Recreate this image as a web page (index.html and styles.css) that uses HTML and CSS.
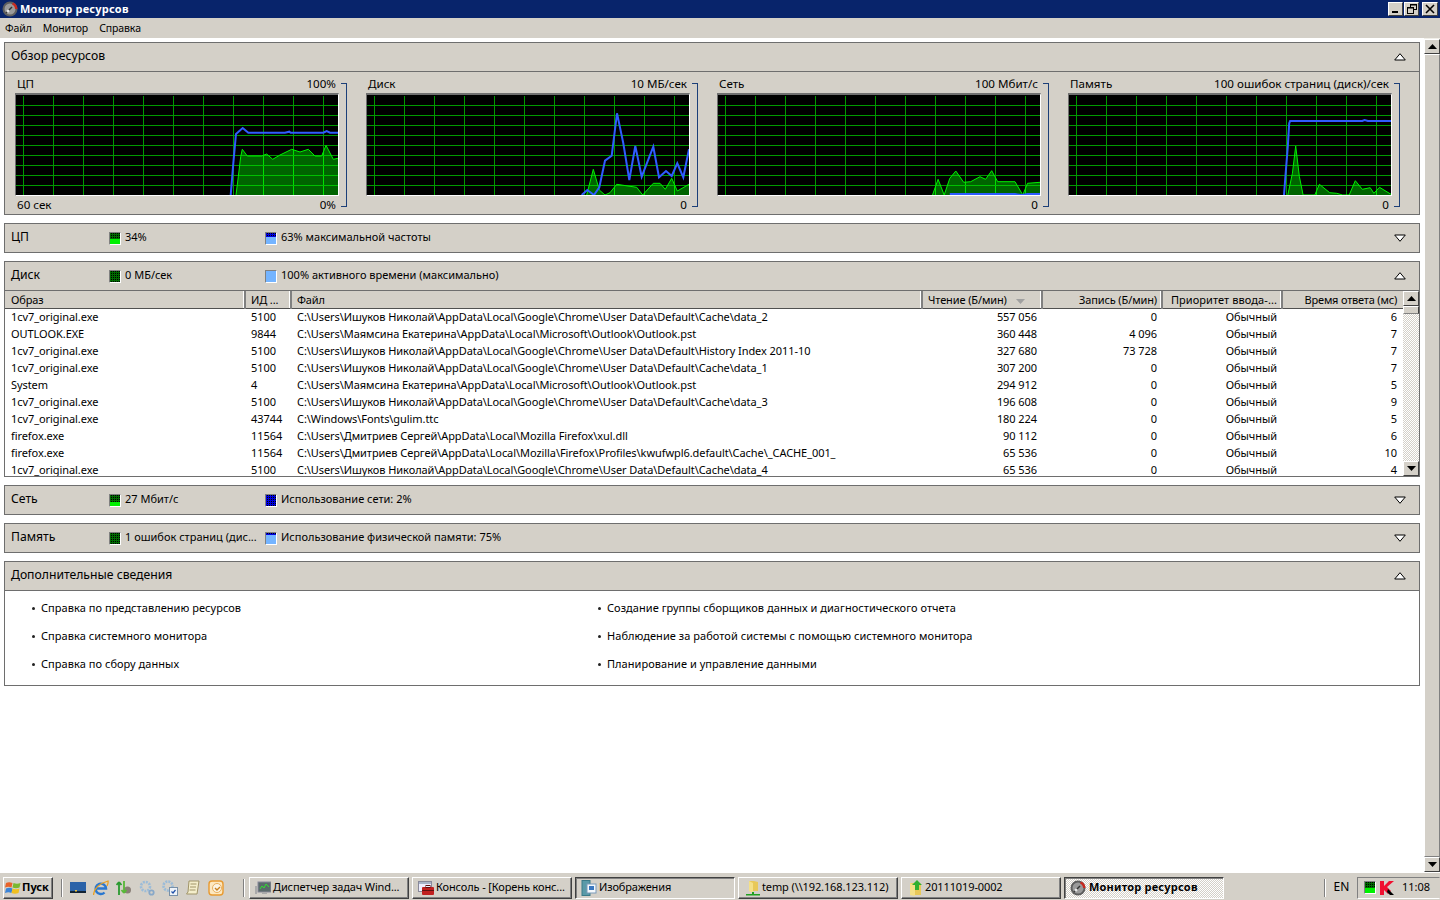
FILE: index.html
```html
<!DOCTYPE html>
<html>
  <head>
    <meta charset="utf-8">
    <title>Монитор ресурсов</title>
    <link rel="stylesheet" href="styles.css">
  </head>
  <body>
    <svg class="defs" width="0" height="0">
      <defs>
        <pattern id="grid" patternUnits="userSpaceOnUse" width="30" height="10">
          <rect x="7" y="0" width="1" height="10" fill="#009a00"></rect>
          <rect x="0" y="0" width="30" height="1" fill="#009a00"></rect>
        </pattern>
        <pattern id="grid-hi" patternUnits="userSpaceOnUse" width="30" height="10">
          <rect x="7" y="0" width="1" height="10" fill="#00e000"></rect>
          <rect x="0" y="0" width="30" height="1" fill="#00c000"></rect>
        </pattern>
        <symbol id="gauge" viewBox="0 0 16 16">
          <circle cx="8" cy="8" r="7.5" fill="#5e5e5e"></circle>
          <circle cx="8" cy="8" r="5.5" fill="#9a9a9a"></circle>
          <path d="M11 1.5 A7.5 7.5 0 0 1 15.5 8 L13 8 A5 5 0 0 0 10 3.5 Z" fill="#c8281e"></path>
          <path d="M4 12 L10 6" stroke="#333" stroke-width="1.5"></path>
          <circle cx="6" cy="10" r="1.5" fill="#e8e8e8"></circle>
        </symbol>
      </defs>
    </svg>

    <div class="titlebar">
      <svg class="title-icon" width="16" height="16"><use href="#gauge"></use></svg>
      <span class="title-text">Монитор ресурсов</span>
      <div class="win-buttons">
        <button class="win-btn">
          <svg width="10" height="10"><rect x="1" y="7" width="6" height="2" fill="#000"></rect></svg>
        </button>
        <button class="win-btn">
          <svg width="10" height="10" fill="none" stroke="#000"><rect x="3.5" y="0.5" width="6" height="5"></rect><rect x="0.5" y="3.5" width="6" height="6" fill="#d4d0c8"></rect><path d="M3 1h7M0 4h7"></path></svg>
        </button>
        <button class="win-btn win-btn-close">
          <svg width="10" height="10" stroke="#000" stroke-width="1.6"><path d="M1 1 L9 9 M9 1 L1 9"></path></svg>
        </button>
      </div>
    </div>

    <div class="menubar">
      <span>Файл</span>
      <span>Монитор</span>
      <span>Справка</span>
    </div>

    <div class="workspace">
      <div class="content">

        <section class="panel">
          <div class="panel-head">
            <span class="panel-title">Обзор ресурсов</span>
            <svg class="chevron" width="12" height="8"><polygon points="6,0.7 11.3,7 0.7,7" fill="#fff" stroke="#000"></polygon></svg>
          </div>
          <div class="graphs">
            <div class="graph-cell">
              <div class="graph-main">
                <div class="graph-labels"><span>ЦП</span><span>100%</span></div>
                <div class="graph-frame">
                  <svg width="322" height="100">
                    <rect width="322" height="100" fill="#000"></rect>
                    <rect y="1" width="322" height="99" fill="url(#grid)"></rect>
                    <polygon class="area" points="220,100 222.3,81.7 224.7,61.7 226.3,54.3 231.3,61 245.7,61 250.7,59 256.7,64.3 264,60 275.7,54.3 284,57 292.3,54.3 299,61 305.7,61 310,50.3 317.3,64.3 322,63.3 322,100"></polygon>
                    <polygon fill="url(#grid-hi)" points="220,100 222.3,81.7 224.7,61.7 226.3,54.3 231.3,61 245.7,61 250.7,59 256.7,64.3 264,60 275.7,54.3 284,57 292.3,54.3 299,61 305.7,61 310,50.3 317.3,64.3 322,63.3 322,100"></polygon>
                    <polyline class="line-green" points="220,100 222.3,81.7 224.7,61.7 226.3,54.3 231.3,61 245.7,61 250.7,59 256.7,64.3 264,60 275.7,54.3 284,57 292.3,54.3 299,61 305.7,61 310,50.3 317.3,64.3 322,63.3"></polyline>
                    <polyline class="line-blue" points="214.7,100 217.3,68.3 220,39 226.7,33 232.3,37.7 269,37.7 273.3,36.7 274.7,37.7 307.3,37.7 310.7,36 314,37.7 322,37.7"></polyline>
                  </svg>
                </div>
                <div class="graph-labels graph-labels-bottom"><span>60 сек</span><span>0%</span></div>
              </div>
              <div class="bracket"></div>
            </div>

            <div class="graph-cell">
              <div class="graph-main">
                <div class="graph-labels"><span>Диск</span><span>10 МБ/сек</span></div>
                <div class="graph-frame">
                  <svg width="322" height="100">
                    <rect width="322" height="100" fill="#000"></rect>
                    <rect y="1" width="322" height="99" fill="url(#grid)"></rect>
                    <polygon class="area" points="219.7,100 226.3,74.3 232.3,95 238,100 243,97.7 249.7,89.3 269.7,92.3 275.7,100 286.3,88.3 293,88.3 298.3,94.3 304.7,83.3 310.3,96 322,89.3 322,100"></polygon>
                    <polygon fill="url(#grid-hi)" points="219.7,100 226.3,74.3 232.3,95 238,100 243,97.7 249.7,89.3 269.7,92.3 275.7,100 286.3,88.3 293,88.3 298.3,94.3 304.7,83.3 310.3,96 322,89.3 322,100"></polygon>
                    <polyline class="line-green" points="219.7,100 226.3,74.3 232.3,95 238,100 243,97.7 249.7,89.3 269.7,92.3 275.7,100 286.3,88.3 293,88.3 298.3,94.3 304.7,83.3 310.3,96 322,89.3"></polyline>
                    <polyline class="line-blue" points="214.7,100 220.3,95 227,100 232.3,92.3 238,65.7 244.7,60.7 250,18.3 256.3,48.3 262.3,85 268.3,51 274.7,81.7 286.3,51.7 292,82.3 299,76 304.7,81 310.3,68.3 316.3,82.3 322,54.3"></polyline>
                  </svg>
                </div>
                <div class="graph-labels graph-labels-bottom"><span></span><span>0</span></div>
              </div>
              <div class="bracket"></div>
            </div>

            <div class="graph-cell">
              <div class="graph-main">
                <div class="graph-labels"><span>Сеть</span><span>100 Мбит/с</span></div>
                <div class="graph-frame">
                  <svg width="322" height="100">
                    <rect width="322" height="100" fill="#000"></rect>
                    <rect y="1" width="322" height="99" fill="url(#grid)"></rect>
                    <polygon class="area" points="214.5,100 220.1,84.3 226.2,100 231.8,83.3 237.8,76 245.7,87.3 252.7,86.7 262,81.7 267.6,84.3 273.7,75.7 279.7,86.7 297,86.7 304.8,100 309.5,88.3 322,87.3 322,100"></polygon>
                    <polygon fill="url(#grid-hi)" points="214.5,100 220.1,84.3 226.2,100 231.8,83.3 237.8,76 245.7,87.3 252.7,86.7 262,81.7 267.6,84.3 273.7,75.7 279.7,86.7 297,86.7 304.8,100 309.5,88.3 322,87.3 322,100"></polygon>
                    <polyline class="line-green" points="214.5,100 220.1,84.3 226.2,100 231.8,83.3 237.8,76 245.7,87.3 252.7,86.7 262,81.7 267.6,84.3 273.7,75.7 279.7,86.7 297,86.7 304.8,100 309.5,88.3 322,87.3"></polyline>
                    <polyline class="line-blue" points="231.8,99 297,99 304,100 309.5,99 322,99"></polyline>
                  </svg>
                </div>
                <div class="graph-labels graph-labels-bottom"><span></span><span>0</span></div>
              </div>
              <div class="bracket"></div>
            </div>

            <div class="graph-cell">
              <div class="graph-main">
                <div class="graph-labels"><span>Память</span><span>100 ошибок страниц (диск)/сек</span></div>
                <div class="graph-frame">
                  <svg width="322" height="100">
                    <rect width="322" height="100" fill="#000"></rect>
                    <rect y="1" width="322" height="99" fill="url(#grid)"></rect>
                    <polygon class="area" points="218.8,100 223.4,78.3 226.7,51 230.4,81.7 234.1,100 245.8,100 250.4,89.3 260.7,97.7 267.7,98.3 273.7,100 280.2,100 286.3,85.7 293.3,94.3 301.2,92.7 304.9,98.3 310.5,92.3 322,99.3 322,100"></polygon>
                    <polygon fill="url(#grid-hi)" points="218.8,100 223.4,78.3 226.7,51 230.4,81.7 234.1,100 245.8,100 250.4,89.3 260.7,97.7 267.7,98.3 273.7,100 280.2,100 286.3,85.7 293.3,94.3 301.2,92.7 304.9,98.3 310.5,92.3 322,99.3 322,100"></polygon>
                    <polyline class="line-green" points="218.8,100 223.4,78.3 226.7,51 230.4,81.7 234.1,100 245.8,100 250.4,89.3 260.7,97.7 267.7,98.3 273.7,100 280.2,100 286.3,85.7 293.3,94.3 301.2,92.7 304.9,98.3 310.5,92.3 322,99.3"></polyline>
                    <polyline class="line-blue" points="215,100 216.4,81.7 218.8,51.7 220.2,28.3 221.1,26 293.3,26 295.6,25 298.9,26 322,26"></polyline>
                  </svg>
                </div>
                <div class="graph-labels graph-labels-bottom"><span></span><span>0</span></div>
              </div>
              <div class="bracket"></div>
            </div>
          </div>
        </section>

        <section class="panel">
          <div class="panel-head panel-head-only">
            <span class="panel-title">ЦП</span>
            <div class="stat">
              <span class="swatch swatch-green"><span class="swatch-level" style="height: 60%"></span></span>
              <span class="stat-text">34%</span>
            </div>
            <div class="stat">
              <span class="swatch swatch-blue"><span class="swatch-level" style="height: 37%"></span></span>
              <span class="stat-text">63% максимальной частоты</span>
            </div>
            <svg class="chevron" width="12" height="8"><polygon points="0.7,1 11.3,1 6,7.3" fill="#fff" stroke="#000"></polygon></svg>
          </div>
        </section>

        <section class="panel">
          <div class="panel-head">
            <span class="panel-title">Диск</span>
            <div class="stat">
              <span class="swatch swatch-green"><span class="swatch-level" style="height: 100%"></span></span>
              <span class="stat-text">0 МБ/сек</span>
            </div>
            <div class="stat">
              <span class="swatch swatch-blue"><span class="swatch-level" style="height: 0%"></span></span>
              <span class="stat-text">100% активного времени (максимально)</span>
            </div>
            <svg class="chevron" width="12" height="8"><polygon points="6,0.7 11.3,7 0.7,7" fill="#fff" stroke="#000"></polygon></svg>
          </div>
          <div class="disk-body">
            <div class="table-wrap">
              <table class="disk-table">
                <colgroup>
                  <col class="col-image">
                  <col class="col-pid">
                  <col class="col-file">
                  <col class="col-num">
                  <col class="col-num">
                  <col class="col-num">
                  <col class="col-last">
                </colgroup>
                <thead>
                  <tr>
                    <th>Образ</th>
                    <th>ИД ...</th>
                    <th>Файл</th>
                    <th>Чтение (Б/мин)<svg class="sort" width="9" height="5"><polygon points="0,0 9,0 4.5,5" fill="#a0a0a0"></polygon></svg></th>
                    <th class="num">Запись (Б/мин)</th>
                    <th class="num th-wide">Приоритет ввода-...</th>
                    <th class="num th-last">Время ответа (мс)</th>
                  </tr>
                </thead>
                <tbody>
                  <tr><td>1cv7_original.exe</td><td>5100</td><td>C:\Users\Ишуков Николай\AppData\Local\Google\Chrome\User Data\Default\Cache\data_2</td><td class="num">557 056</td><td class="num">0</td><td class="num">Обычный</td><td class="num">6</td></tr>
                  <tr><td>OUTLOOK.EXE</td><td>9844</td><td>C:\Users\Маямсина Екатерина\AppData\Local\Microsoft\Outlook\Outlook.pst</td><td class="num">360 448</td><td class="num">4 096</td><td class="num">Обычный</td><td class="num">7</td></tr>
                  <tr><td>1cv7_original.exe</td><td>5100</td><td>C:\Users\Ишуков Николай\AppData\Local\Google\Chrome\User Data\Default\History Index 2011-10</td><td class="num">327 680</td><td class="num">73 728</td><td class="num">Обычный</td><td class="num">7</td></tr>
                  <tr><td>1cv7_original.exe</td><td>5100</td><td>C:\Users\Ишуков Николай\AppData\Local\Google\Chrome\User Data\Default\Cache\data_1</td><td class="num">307 200</td><td class="num">0</td><td class="num">Обычный</td><td class="num">7</td></tr>
                  <tr><td>System</td><td>4</td><td>C:\Users\Маямсина Екатерина\AppData\Local\Microsoft\Outlook\Outlook.pst</td><td class="num">294 912</td><td class="num">0</td><td class="num">Обычный</td><td class="num">5</td></tr>
                  <tr><td>1cv7_original.exe</td><td>5100</td><td>C:\Users\Ишуков Николай\AppData\Local\Google\Chrome\User Data\Default\Cache\data_3</td><td class="num">196 608</td><td class="num">0</td><td class="num">Обычный</td><td class="num">9</td></tr>
                  <tr><td>1cv7_original.exe</td><td>43744</td><td>C:\Windows\Fonts\gulim.ttc</td><td class="num">180 224</td><td class="num">0</td><td class="num">Обычный</td><td class="num">5</td></tr>
                  <tr><td>firefox.exe</td><td>11564</td><td>C:\Users\Дмитриев Сергей\AppData\Local\Mozilla Firefox\xul.dll</td><td class="num">90 112</td><td class="num">0</td><td class="num">Обычный</td><td class="num">6</td></tr>
                  <tr><td>firefox.exe</td><td>11564</td><td>C:\Users\Дмитриев Сергей\AppData\Local\Mozilla\Firefox\Profiles\kwufwpl6.default\Cache\_CACHE_001_</td><td class="num">65 536</td><td class="num">0</td><td class="num">Обычный</td><td class="num">10</td></tr>
                  <tr><td>1cv7_original.exe</td><td>5100</td><td>C:\Users\Ишуков Николай\AppData\Local\Google\Chrome\User Data\Default\Cache\data_4</td><td class="num">65 536</td><td class="num">0</td><td class="num">Обычный</td><td class="num">4</td></tr>
                </tbody>
              </table>
            </div>
            <div class="table-scroll">
              <div class="scroll-btn"><svg width="9" height="5"><polygon points="4.5,0 9,5 0,5" fill="#000"></polygon></svg></div>
              <div class="scroll-thumb"></div>
              <div class="scroll-track"></div>
              <div class="scroll-btn"><svg width="9" height="5"><polygon points="0,0 9,0 4.5,5" fill="#000"></polygon></svg></div>
            </div>
          </div>
        </section>

        <section class="panel">
          <div class="panel-head panel-head-only">
            <span class="panel-title">Сеть</span>
            <div class="stat">
              <span class="swatch swatch-green"><span class="swatch-level" style="height: 65%"></span></span>
              <span class="stat-text">27 Мбит/с</span>
            </div>
            <div class="stat">
              <span class="swatch swatch-blue"><span class="swatch-level" style="height: 100%"></span></span>
              <span class="stat-text">Использование сети: 2%</span>
            </div>
            <svg class="chevron" width="12" height="8"><polygon points="0.7,1 11.3,1 6,7.3" fill="#fff" stroke="#000"></polygon></svg>
          </div>
        </section>

        <section class="panel">
          <div class="panel-head panel-head-only">
            <span class="panel-title">Память</span>
            <div class="stat">
              <span class="swatch swatch-green"><span class="swatch-level" style="height: 100%"></span></span>
              <span class="stat-text">1 ошибок страниц (дис...</span>
            </div>
            <div class="stat">
              <span class="swatch swatch-blue"><span class="swatch-level" style="height: 25%"></span></span>
              <span class="stat-text">Использование физической памяти: 75%</span>
            </div>
            <svg class="chevron" width="12" height="8"><polygon points="0.7,1 11.3,1 6,7.3" fill="#fff" stroke="#000"></polygon></svg>
          </div>
        </section>

        <section class="panel panel-links">
          <div class="panel-head">
            <span class="panel-title">Дополнительные сведения</span>
            <svg class="chevron" width="12" height="8"><polygon points="6,0.7 11.3,7 0.7,7" fill="#fff" stroke="#000"></polygon></svg>
          </div>
          <ul class="links">
            <li>Справка по представлению ресурсов</li>
            <li>Создание группы сборщиков данных и диагностического отчета</li>
            <li>Справка системного монитора</li>
            <li>Наблюдение за работой системы с помощью системного монитора</li>
            <li>Справка по сбору данных</li>
            <li>Планирование и управление данными</li>
          </ul>
        </section>
      </div>

      <div class="page-scroll">
        <div class="scroll-btn"><svg width="9" height="5"><polygon points="4.5,0 9,5 0,5" fill="#000"></polygon></svg></div>
        <div class="page-thumb"></div>
        <div class="scroll-btn"><svg width="9" height="5"><polygon points="0,0 9,0 4.5,5" fill="#000"></polygon></svg></div>
      </div>
    </div>

    <div class="taskbar">
      <button class="start">
        <svg width="16" height="16">
          <path d="M1 3 Q4 1.5 7.5 3 L6.5 7.5 Q3.5 6 0 7.5 Z" fill="#e8632a"></path>
          <path d="M8.5 3 Q12 4.5 15.5 3 L14.5 7.5 Q11 9 7.5 7.5 Z" fill="#7ab82e"></path>
          <path d="M0 8.5 Q3.5 7 6.5 8.5 L5.5 13 Q2.5 11.5 -1 13 Z" fill="#3a84d8" transform="translate(1 0)"></path>
          <path d="M7.5 8.5 Q11 10 14.5 8.5 L13.5 13 Q10 14.5 6.5 13 Z" fill="#f0c020"></path>
        </svg>
        <span class="bar-text">Пуск</span>
      </button>
      <span class="tb-sep tb-sep-first"></span>
      <div class="quick">
        <svg width="16" height="16"><rect y="2" width="16" height="11" fill="#2a62a8"></rect><rect y="11" width="16" height="2" fill="#123"></rect><rect x="5" y="10" width="2" height="1.5" fill="#e8c040"></rect></svg>
        <svg width="16" height="16" fill="none"><path d="M3 8.5 H13 A5.2 5.2 0 1 0 11.5 12.5" stroke="#2a78d0" stroke-width="2.4"></path><path d="M0.5 15 Q1.5 5 15 1 Q15.5 3 14 6" stroke="#e8a020" stroke-width="1.3"></path></svg>
        <svg width="16" height="16" fill="none"><circle cx="11.5" cy="10" r="3.5" fill="#8a7f78"></circle><path d="M3 15V2M3 2L0.5 5M3 2L5.5 5" stroke="#2a9a30" stroke-width="1.8"></path><path d="M8 1V13M8 13L5.5 10M8 13L10.5 10" stroke="#58b838" stroke-width="1.8"></path></svg>
        <svg width="16" height="16" fill="none"><circle cx="6.5" cy="6.5" r="4.5" stroke="#9cbcd8" stroke-width="2.6" stroke-dasharray="2 1"></circle><circle cx="12.5" cy="12.5" r="2.2" stroke="#88a8c8" stroke-width="1.8"></circle></svg>
        <svg width="16" height="16" fill="none"><circle cx="6" cy="6" r="4.5" stroke="#9cbcd8" stroke-width="2.6" stroke-dasharray="2 1"></circle><rect x="7.5" y="7.5" width="8" height="8" fill="#eef2f8" stroke="#7890a8"></rect><path d="M9.5 11.5l1.5 1.5 2.5-3" stroke="#2050a8" stroke-width="1.2"></path></svg>
        <svg width="16" height="16"><path d="M4 1H14L12 14H1.5L3 12Z" fill="#f4eecb" stroke="#a09468"></path><path d="M5.5 4h6M5 7h6M4.5 10h6" stroke="#a09468"></path></svg>
        <svg width="16" height="16" fill="none"><rect x="1" y="1" width="14" height="14" rx="3" fill="#fde8c0" stroke="#e89a30" stroke-width="1.4"></rect><circle cx="9" cy="8" r="4.5" fill="#fbf4e4" stroke="#e8b060"></circle><path d="M7 8l2 2 3-3" stroke="#c88020" stroke-width="1.4"></path></svg>
      </div>
      <span class="tb-sep tb-sep-second"></span>
      <div class="tasks">
        <button class="task">
          <svg width="16" height="16"><rect x="3" y="2" width="13" height="10" fill="#5a6a6a" stroke="#889"></rect><path d="M5 9l2-3 2 2 2-4 3 3" stroke="#30e030" fill="none"></path><rect x="7" y="12" width="5" height="2" fill="#aaa"></rect><rect y="6" width="2" height="8" fill="#aaa"></rect></svg>
          <span class="bar-text">Диспетчер задач Wind...</span>
        </button>
        <button class="task">
          <svg width="16" height="16"><rect x="0.5" y="1.5" width="13" height="10" fill="#eef" stroke="#889"></rect><rect x="1" y="2" width="12" height="2" fill="#a8b4c8"></rect><rect x="4" y="7" width="12" height="8" rx="1" fill="#c02020"></rect><rect x="4" y="10" width="12" height="1" fill="#601010"></rect><rect x="8" y="5.5" width="4" height="2" fill="none" stroke="#601010"></rect></svg>
          <span class="bar-text">Консоль - [Корень конс...</span>
        </button>
        <button class="task task-down">
          <svg width="16" height="16"><rect x="1" y="0.5" width="8" height="15" fill="#5a9aa8" stroke="#3a7a88"></rect><rect x="6" y="4" width="9" height="9" fill="#f4f8fc" stroke="#7a9ab8"></rect><rect x="8" y="6" width="5" height="4" fill="#3a78c0"></rect></svg>
          <span class="bar-text">Изображения</span>
        </button>
        <button class="task">
          <svg width="16" height="16"><path d="M5 1H10L14 2V11H5Z" fill="#e8c858"></path><path d="M5 1L9 3V13L5 11Z" fill="#f4e088"></path><rect x="8" y="12" width="2" height="2" fill="#20a020"></rect><rect x="2" y="14" width="14" height="1.5" fill="#20a020"></rect></svg>
          <span class="bar-text">temp (\\192.168.123.112)</span>
        </button>
        <button class="task">
          <svg width="16" height="16"><path d="M3 3H12L14 4V15H3Z" fill="#e8c858"></path><path d="M3 3L8 5V16L3 15Z" fill="#f4e088"></path><path d="M9 0L14 5H11V10H7V5H4Z" fill="#30b030" transform="translate(1 0)"></path></svg>
          <span class="bar-text">20111019-0002</span>
        </button>
        <button class="task task-down task-active">
          <svg width="16" height="16"><use href="#gauge"></use></svg>
          <span class="bar-text">Монитор ресурсов</span>
        </button>
      </div>
      <div class="tray-group">
        <span class="tb-sep"></span>
        <span class="lang bar-text">EN</span>
        <div class="tray">
          <span class="tray-meter"><span class="swatch-level"></span></span>
          <svg width="15" height="14"><path d="M0 0H4V5L9 0H14L7 6L11 10L8 13L4 9V14H0Z" fill="#f01030"></path><path d="M8 8l6 6h-4l-3-3z" fill="#000"></path></svg>
          <span class="clock bar-text">11:08</span>
        </div>
      </div>
    </div>
  </body>
</html>
```

FILE: styles.css
```css
* {
  box-sizing: border-box;
}
html, body {
  margin: 0;
  padding: 0;
  height: 100%;
}
body {
  width: 1440px;
  height: 900px;
  overflow: hidden;
  display: flex;
  flex-direction: column;
  background: #fff;
  color: #000;
  font: 11px "Noto Sans", Tahoma, sans-serif;
}
button {
  font: inherit;
  color: inherit;
  margin: 0;
  padding: 0;
}
.defs {
  display: block;
}

/* title + menu */
.titlebar {
  height: 18px;
  flex: none;
  display: flex;
  align-items: center;
  padding-left: 2px;
  background: #08246b;
  color: #fff;
}
.title-text {
  margin-left: 2px;
  padding-bottom: 2px;
  font-weight: bold;
  letter-spacing: .2px;
}
.win-buttons {
  margin-left: auto;
  margin-right: 2px;
  display: flex;
  gap: 1px;
}
.win-btn {
  width: 15px;
  height: 14px;
  display: flex;
  align-items: center;
  justify-content: center;
  background: #d4d0c8;
  border: 1px solid;
  border-color: #fff #404040 #404040 #fff;
}
.win-btn-close {
  width: 16px;
  margin-left: 2px;
}
.menubar {
  height: 20px;
  flex: none;
  display: flex;
  align-items: center;
  gap: 11px;
  padding-left: 5px;
  background: #d4d0c8;
  font-size: 10.5px;
  letter-spacing: -.1px;
}

/* main area */
.workspace {
  flex: 1;
  min-height: 0;
  display: flex;
}
.content {
  flex: 1;
  padding: 4px 4px 0 4px;
  display: flex;
  flex-direction: column;
  gap: 8px;
}
.panel {
  flex: none;
  border: 1px solid #6e6e6e;
  background: #d4d0c8;
}
.panel-links {
  background: #fff;
}
.panel-head {
  height: 29px;
  display: flex;
  align-items: center;
  padding-left: 6px;
  padding-right: 13px;
  background: #d4d0c8;
  border-bottom: 1px solid #6e6e6e;
}
.panel-head-only {
  height: 28px;
  border-bottom: 0;
}
.panel-title {
  width: 98px;
  flex: none;
  margin-bottom: 4px;
  white-space: nowrap;
  font-size: 12.2px;
}
.chevron {
  margin-left: auto;
  margin-bottom: 1px;
  flex: none;
}
.stat {
  width: 156px;
  flex: none;
  display: flex;
  align-items: center;
  gap: 4px;
  white-space: nowrap;
}
.stat-text {
  margin-bottom: 4px;
}
.swatch {
  width: 12px;
  height: 13px;
  flex: none;
  border: 1px solid;
  border-color: #808080 #fff #fff #808080;
}
.swatch-level {
  display: block;
  background: repeating-conic-gradient(#000 0 25%, #006a00 0 100%) 0 0 / 2px 2px;
  height: 100%;
}
.swatch-green {
  background: #00f000;
}
.swatch-blue {
  background: #74b4ff;
}
.swatch-blue .swatch-level {
  background: repeating-conic-gradient(#000 0 25%, #0000e0 0 100%) 0 0 / 2px 2px;
}

/* graphs */
.graphs {
  height: 142px;
  display: flex;
  padding: 4px 0 0 10px;
}
.graph-cell {
  width: 351px;
  flex: none;
  display: flex;
}
.graph-main {
  width: 324px;
  flex: none;
}
.graph-labels {
  height: 17px;
  display: flex;
  align-items: center;
  justify-content: space-between;
  padding: 0 3px 2px 2px;
  font-size: 11.6px;
}
.graph-labels-bottom {
  height: 18px;
}
.graph-frame {
  width: 324px;
  height: 103px;
  border-style: solid;
  border-width: 2px 1px 1px 1px;
  border-color: #707070 #fff #fff #707070;
}
.graph-frame svg {
  display: block;
}
.area {
  fill: #006400;
}
.line-green {
  fill: none;
  stroke: #00f000;
  stroke-width: 1;
}
.line-blue {
  fill: none;
  stroke: #2f5cff;
  stroke-width: 2;
}
.bracket {
  width: 6px;
  height: 124px;
  margin: 7px 0 0 2px;
  border: 1px solid #1c3f78;
  border-left: 0;
}

/* disk table */
.disk-body {
  height: 185px;
  display: flex;
  background: #fff;
}
.table-wrap {
  width: 1398px;
  flex: none;
  overflow: hidden;
}
.disk-table {
  width: 1398px;
  table-layout: fixed;
  border-collapse: collapse;
  letter-spacing: -.07px;
}
.col-image {
  width: 240px;
}
.col-pid {
  width: 46px;
}
.col-file {
  width: 631px;
}
.col-num {
  width: 120px;
}
.col-last {
  width: 121px;
}
.disk-table th {
  height: 17px;
  padding: 1px 5px 0 5px;
  font-weight: normal;
  text-align: left;
  white-space: nowrap;
  letter-spacing: -.12px;
  background: #d4d0c8;
  border-bottom: 1px solid #505050;
  border-right: 2px solid #808080;
  box-shadow: inset -1px 0 #fff;
}
.disk-table th:first-child {
  padding-left: 6px;
}
.disk-table th:last-child {
  border-right: 0;
  box-shadow: none;
}
.disk-table th.num {
  padding-right: 4px;
}
.disk-table th.th-wide {
  letter-spacing: .08px;
}
.disk-table th.th-last {
  padding-right: 6px;
  letter-spacing: -.2px;
}
.disk-table td {
  height: 17px;
  padding: 0 5px 0 6px;
  white-space: nowrap;
  overflow: hidden;
}
.disk-table td:last-child {
  padding-right: 6px;
}
.disk-table .num {
  text-align: right;
}
.sort {
  margin-left: 9px;
}
.table-scroll {
  width: 16px;
  flex: none;
  display: flex;
  flex-direction: column;
  background: #d4d0c8;
}
.scroll-btn {
  height: 15px;
  width: 16px;
  flex: none;
  display: flex;
  align-items: center;
  justify-content: center;
  background: #d4d0c8;
  border: 1px solid;
  border-color: #fff #404040 #404040 #fff;
}
.scroll-thumb {
  height: 8px;
  flex: none;
  background: #d4d0c8;
  border: 1px solid;
  border-color: #fff #404040 #808080 #fff;
}
.scroll-track {
  flex: 1;
  background: repeating-conic-gradient(#fff 0 25%, #d4d0c8 0 50%) 0 0 / 2px 2px;
}

/* links */
.links {
  list-style: none;
  margin: 0;
  padding: 2px 0 8px 25px;
  display: grid;
  grid-template-columns: 566px 1fr;
  grid-auto-rows: 28px;
  background: #fff;
  letter-spacing: .05px;
}
.links li {
  display: flex;
  align-items: center;
  white-space: nowrap;
}
.links li::before {
  content: "";
  width: 3px;
  height: 3px;
  margin: 2px 6px 0 2px;
  background: #222;
  border-radius: 50%;
}

/* page scrollbar */
.page-scroll {
  width: 16px;
  flex: none;
  display: flex;
  flex-direction: column;
  padding-top: 1px;
  background: #f0eee8;
}
.page-thumb {
  flex: 1;
  background: #d4d0c8;
  border: 1px solid;
  border-color: #fff #808080 #808080 #fff;
}

/* taskbar */
.taskbar {
  height: 28px;
  flex: none;
  display: flex;
  align-items: center;
  padding: 2px 0 0 3px;
  background: #d4d0c8;
  border-top: 1px solid #fff;
}
.bar-text {
  padding-bottom: 2px;
}
.start {
  width: 50px;
  height: 22px;
  flex: none;
  display: flex;
  align-items: center;
  gap: 1px;
  padding-left: 1px;
  font-weight: bold;
  background: #d4d0c8;
  border: 1px solid;
  border-color: #fff #404040 #404040 #fff;
  box-shadow: inset -1px -1px #808080;
}
.tb-sep {
  width: 2px;
  height: 18px;
  flex: none;
  border-left: 1px solid #808080;
  border-right: 1px solid #fff;
}
.tb-sep-first {
  margin-left: 8px;
}
.tb-sep-second {
  margin-left: 19px;
}
.quick {
  display: flex;
  gap: 7px;
  margin-left: 7px;
}
.tasks {
  display: flex;
  gap: 3px;
  margin-left: 4px;
}
.task {
  width: 160px;
  height: 22px;
  display: flex;
  align-items: center;
  gap: 2px;
  padding-left: 5px;
  white-space: nowrap;
  letter-spacing: -.12px;
  background: #d4d0c8;
  border: 1px solid;
  border-color: #fff #404040 #404040 #fff;
  box-shadow: inset -1px -1px #808080;
}
.task-down {
  border-color: #404040 #fff #fff #404040;
  box-shadow: inset 1px 1px #808080;
}
.task-active {
  gap: 3px;
  font-weight: bold;
  letter-spacing: .2px;
  background: repeating-conic-gradient(#fff 0 25%, #d4d0c8 0 50%) 0 0 / 2px 2px;
}
.tray-group {
  margin-left: auto;
  display: flex;
  align-items: center;
}
.lang {
  width: 31px;
  text-align: center;
  font-size: 12px;
}
.tray {
  width: 83px;
  height: 22px;
  display: flex;
  align-items: center;
  padding-left: 6px;
  gap: 4px;
  border: 1px solid;
  border-color: #808080 #d4d0c8 #fff #808080;
}
.tray-meter {
  width: 12px;
  height: 13px;
  background: #00f000;
  border: 1px solid;
  border-color: #808080 #fff #fff #808080;
}
.tray-meter .swatch-level {
  height: 55%;
}
.clock {
  margin-left: 3px;
}
```
